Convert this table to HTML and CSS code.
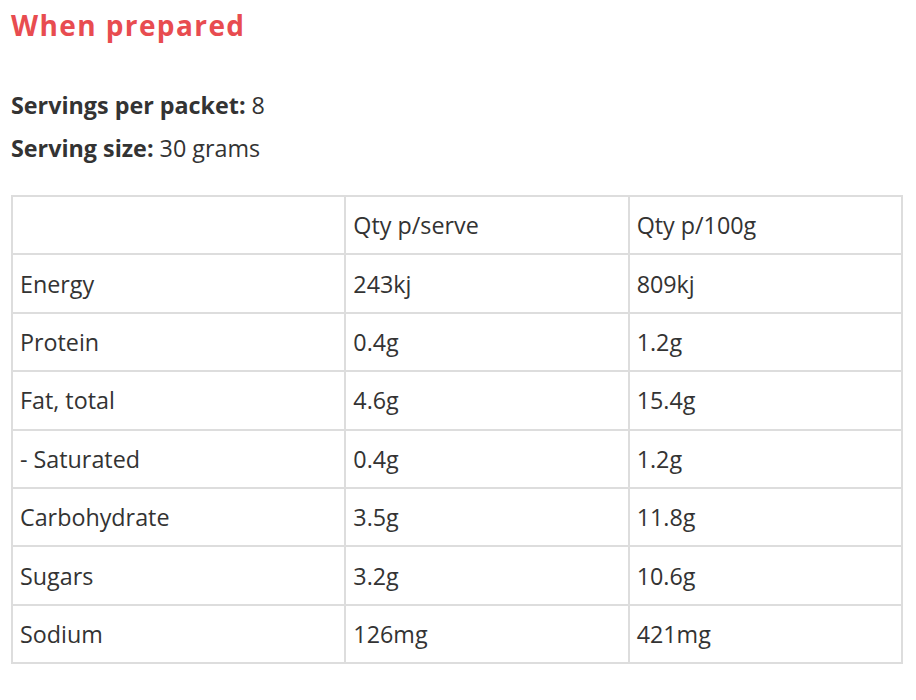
FILE: index.html
```html
<!DOCTYPE html>
<html lang="en">
<head>
<meta charset="utf-8">
<link rel="stylesheet" href="styles.css">
</head>
<body>
<section class="nutrition">
  <h2 class="title">When prepared</h2>
  <div class="meta">
    <p class="meta-line"><strong>Servings per packet:</strong> 8</p>
    <p class="meta-line"><strong>Serving size:</strong> 30 grams</p>
  </div>
  <table class="info">
    <colgroup>
      <col class="c1"><col class="c2"><col class="c3">
    </colgroup>
    <tr><td></td><td>Qty p/serve</td><td>Qty p/100g</td></tr>
    <tr><td>Energy</td><td>243kj</td><td>809kj</td></tr>
    <tr><td>Protein</td><td>0.4g</td><td>1.2g</td></tr>
    <tr><td>Fat, total</td><td>4.6g</td><td>15.4g</td></tr>
    <tr><td>- Saturated</td><td>0.4g</td><td>1.2g</td></tr>
    <tr><td>Carbohydrate</td><td>3.5g</td><td>11.8g</td></tr>
    <tr><td>Sugars</td><td>3.2g</td><td>10.6g</td></tr>
    <tr><td>Sodium</td><td>126mg</td><td>421mg</td></tr>
  </table>
</section>
</body>
</html>
```
FILE: styles.css
```css
html, body {
  margin: 0;
  padding: 0;
  background: #fff;
}
body {
  font-family: "Open Sans", "Noto Sans", sans-serif;
  color: #333;
}
.nutrition {
  padding: 0 13px 0 11px;
}
.title {
  margin: 0;
  padding-top: 6px;
  font-size: 28px;
  line-height: 38px;
  font-weight: 700;
  letter-spacing: 1.4px;
  color: #e84c50;
}
.meta {
  margin-top: 40px;
}
.meta-line {
  margin: 0;
  font-size: 23.3px;
  line-height: 43px;
}
.meta-line strong {
  font-weight: 700;
}
.info {
  margin-top: 25px;
  width: 892px;
  border-collapse: collapse;
  font-size: 23.3px;
}
.c1 { width: 334px; }
.c2 { width: 284px; }
.c3 { width: 274px; }
.info td {
  border: 2px solid #dddddd;
  height: 56.4px;
  padding: 0 7px;
  vertical-align: middle;
}
```
